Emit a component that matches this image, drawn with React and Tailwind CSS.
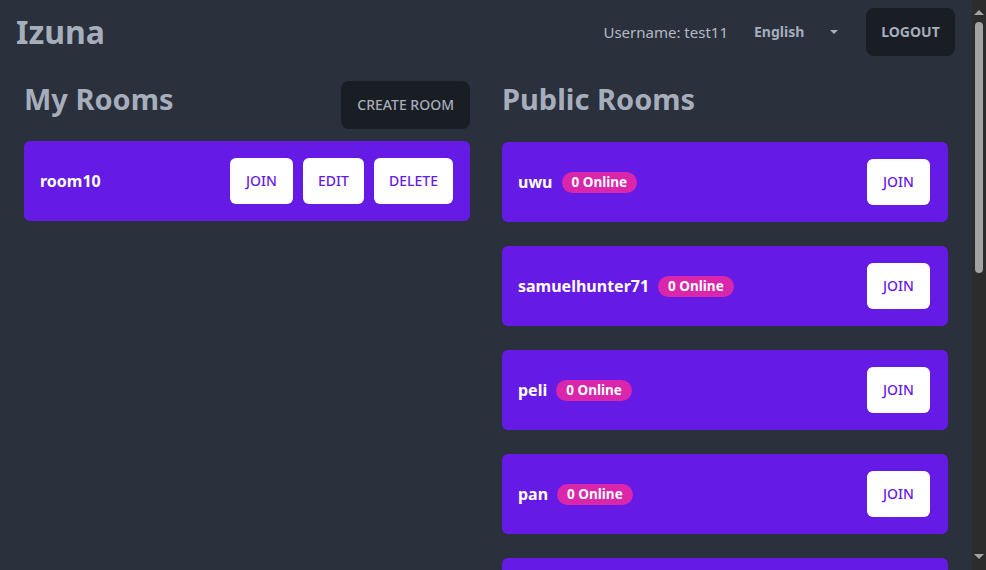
const myRooms = [{ name: "room10" }];
const publicRooms = [
  { name: "uwu", online: 0 },
  { name: "samuelhunter71", online: 0 },
  { name: "peli", online: 0 },
  { name: "pan", online: 0 },
  { name: "mesa", online: 0 },
];

function WhiteBtn({ children, w = "w-[63px]" }) {
  return (
    <button className={`h-[46px] ${w} rounded-md bg-white text-[#661ae6] text-sm font-medium uppercase`}>
      {children}
    </button>
  );
}

// fake classic scrollbar, the screenshot shows one on the right
function Scrollbar() {
  return (
    <div className="w-[14px] shrink-0 bg-[#2c2c2c] flex flex-col items-center">
      <div className="mt-[10px] border-x-[5px] border-b-[5px] border-x-transparent border-b-[#a3a3a3]" />
      <div className="mt-[7px] w-[8px] h-[251px] rounded-full bg-[#a3a3a3]" />
      <div className="mt-auto mb-[11px] border-x-[5px] border-t-[5px] border-x-transparent border-t-[#a3a3a3]" />
    </div>
  );
}

export default function App() {
  return (
    <div
      className="flex h-screen overflow-hidden bg-[#2a303c] text-[#a6adbb]"
      style={{ fontFamily: '"Noto Sans", "Open Sans", sans-serif' }}
    >
      <div className="flex-1 min-w-0 overflow-hidden">
        <div className="flex items-center justify-between h-16 pl-2 pr-[17px] py-2">
          <div className="px-2 text-[32px] font-bold leading-none">Izuna</div>
          <div className="flex items-center">
            <span className="text-[15px] text-[#b3b9c5] mr-[26px]">Username: test11</span>
            <div className="flex items-center w-[112px] text-sm font-bold">
              <span>English</span>
              <span className="ml-auto mr-[28px] border-x-4 border-t-4 border-x-transparent border-t-[#a6adbb]" />
            </div>
            <button className="h-12 w-[89px] rounded-lg bg-[#191d24] text-sm font-bold uppercase">
              Logout
            </button>
          </div>
        </div>

        <div className="grid grid-cols-2 gap-8 px-6 pt-[17px]">
          <div>
            <div className="flex items-start justify-between h-12 mb-3">
              <h2 className="mt-[3px] text-[29px] leading-none font-bold">My Rooms</h2>
              <button className="h-12 px-4 rounded-lg bg-[#191d24] text-sm font-medium uppercase">
                Create Room
              </button>
            </div>
            <div className="flex flex-col gap-6">
              {myRooms.map((r) => (
                <div key={r.name} className="flex items-center justify-between h-20 pl-4 pr-[17px] rounded-md bg-[#661ae6]">
                  <span className="text-white text-[16px] font-bold">{r.name}</span>
                  <div className="flex gap-2.5">
                    <WhiteBtn>Join</WhiteBtn>
                    <WhiteBtn w="w-[61px]">Edit</WhiteBtn>
                    <WhiteBtn w="w-[79px]">Delete</WhiteBtn>
                  </div>
                </div>
              ))}
            </div>
          </div>

          <div>
            <div className="flex items-start h-12 mb-[13px]">
              <h2 className="mt-[3px] text-[29px] leading-none font-bold">Public Rooms</h2>
            </div>
            <div className="flex flex-col gap-6">
              {publicRooms.map((r) => (
                <div key={r.name} className="flex items-center justify-between h-20 pl-4 pr-[18px] rounded-md bg-[#661ae6]">
                  <div className="flex items-center gap-[9px]">
                    <span className="text-white text-[16px] font-bold">{r.name}</span>
                    <span className="h-[21px] px-2.5 flex items-center rounded-full bg-[#d926aa] text-white text-[13.5px] font-bold">
                      {r.online} Online
                    </span>
                  </div>
                  <WhiteBtn>Join</WhiteBtn>
                </div>
              ))}
            </div>
          </div>
        </div>
      </div>
      <Scrollbar />
    </div>
  );
}
